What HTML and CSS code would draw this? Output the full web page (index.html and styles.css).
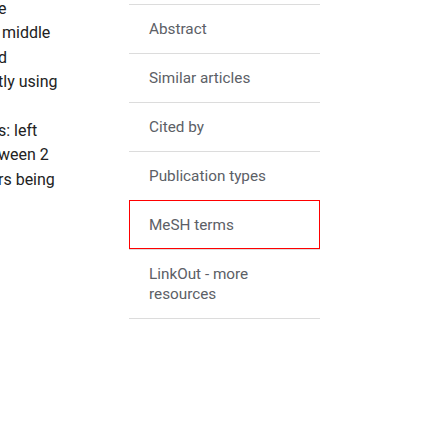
FILE: index.html
```html
<!DOCTYPE html>
<html lang="en">
<head>
<meta charset="utf-8">
<title>Page navigation</title>
<link rel="stylesheet" href="styles.css">
</head>
<body>
<div class="page">
  <div class="prose">
    <div class="line">e</div>
    <div class="line">&nbsp;middle</div>
    <div class="line">d</div>
    <div class="line">tly using</div>
    <div class="line">&nbsp;</div>
    <div class="line">s: left</div>
    <div class="line">ween 2</div>
    <div class="line">rs being</div>
  </div>
  <nav class="page-nav">
    <ul class="nav-list">
      <li class="nav-item"><a class="nav-link" href="#abstract">Abstract</a></li>
      <li class="nav-item"><a class="nav-link" href="#similar">Similar articles</a></li>
      <li class="nav-item"><a class="nav-link" href="#cited">Cited by</a></li>
      <li class="nav-item"><a class="nav-link" href="#types">Publication types</a></li>
      <li class="nav-item is-active"><a class="nav-link" href="#mesh">MeSH terms</a></li>
      <li class="nav-item"><a class="nav-link" href="#linkout">LinkOut - more resources</a></li>
    </ul>
  </nav>
</div>
</body>
</html>
```
FILE: styles.css
```css
html, body {
  margin: 0;
  padding: 0;
  background: #ffffff;
}

.page {
  display: flex;
  align-items: flex-start;
  width: 448px;
  height: 448px;
  overflow: hidden;
}

.prose {
  width: 129px;
  flex: none;
  margin-left: -2px;
  margin-top: -3px;
  font-family: Roboto, "Liberation Sans", sans-serif;
  font-size: 16px;
  line-height: 24.4px;
  color: #222222;
}

.line {
  white-space: nowrap;
}

.page-nav {
  flex: none;
  width: 191px;
  margin-left: 2px;
  padding-top: 4px;
}

.nav-list {
  list-style: none;
  margin: 0;
  padding: 0;
  border-bottom: 1px solid #dcdcdc;
}

.nav-item {
  border-top: 1px solid #dcdcdc;
}

.nav-item.is-active {
  outline: 1px solid #ff0000;
  outline-offset: -1px;
  position: relative;
}

.nav-link {
  display: block;
  padding: 14px 20px;
  font-family: Roboto, "Liberation Sans", sans-serif;
  font-size: 15.3px;
  line-height: 20px;
  color: #5c6066;
  text-decoration: none;
}
```
